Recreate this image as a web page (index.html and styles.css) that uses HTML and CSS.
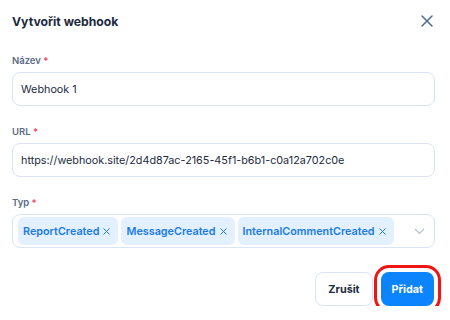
FILE: index.html
```html
<!DOCTYPE html>
<html lang="cs">

<head>
  <meta charset="UTF-8" />
  <meta name="viewport" content="width=device-width, initial-scale=1.0" />
  <title>Vytvořit webhook</title>
  <link rel="stylesheet" href="styles.css">
</head>

<body>
  <div class="modal">
    <div class="modal-header">
      <h2>Vytvořit webhook</h2>
      <button class="close" aria-label="Zavřít">
        <svg width="12" height="12" viewBox="0 0 12 12">
          <path d="M1 1 L11 11 M11 1 L1 11" stroke="currentColor" stroke-width="1.5" stroke-linecap="round" fill="none" />
        </svg>
      </button>
    </div>

    <div class="field">
      <label for="name">Název <span class="req">*</span></label>
      <input type="text" id="name" value="Webhook 1" />
    </div>

    <div class="field">
      <label for="url">URL <span class="req">*</span></label>
      <input type="text" id="url" value="https://webhook.site/2d4d87ac-2165-45f1-b6b1-c0a12a702c0e" />
    </div>

    <div class="field">
      <label>Typ <span class="req">*</span></label>
      <div class="select">
        <div class="chips">
          <span class="chip">ReportCreated
            <svg class="chip-x" width="7" height="7" viewBox="0 0 7 7"><path d="M0.5 0.5 L6.5 6.5 M6.5 0.5 L0.5 6.5" stroke="currentColor" stroke-width="1" fill="none" /></svg>
          </span>
          <span class="chip">MessageCreated
            <svg class="chip-x" width="7" height="7" viewBox="0 0 7 7"><path d="M0.5 0.5 L6.5 6.5 M6.5 0.5 L0.5 6.5" stroke="currentColor" stroke-width="1" fill="none" /></svg>
          </span>
          <span class="chip">InternalCommentCreated
            <svg class="chip-x" width="7" height="7" viewBox="0 0 7 7"><path d="M0.5 0.5 L6.5 6.5 M6.5 0.5 L0.5 6.5" stroke="currentColor" stroke-width="1" fill="none" /></svg>
          </span>
        </div>
        <svg class="chevron" width="11" height="7" viewBox="0 0 11 7">
          <path d="M1 1 L5.5 5.5 L10 1" stroke="currentColor" stroke-width="1.2" fill="none" />
        </svg>
      </div>
    </div>

    <div class="actions">
      <button class="btn btn-cancel">Zrušit</button>
      <button class="btn btn-primary">Přidat</button>
    </div>
  </div>
</body>

</html>
```

FILE: styles.css
```css
body {
  margin: 0;
  background-color: #ffffff;
  font-family: 'Inter', 'Noto Sans', sans-serif;
  color: #1c2b3e;
}

.modal {
  padding: 12px 15px 0 12px;
}

.modal-header {
  display: flex;
  justify-content: space-between;
  align-items: center;
  height: 20px;
  margin-bottom: 23px;
}

.modal-header h2 {
  margin: 0;
  font-size: 12.2px;
  line-height: 20px;
  font-weight: 700;
  color: #1c2b3e;
}

.close {
  background: none;
  border: none;
  padding: 0;
  margin: -3px 2px 0 0;
  color: #4d6b94;
  display: flex;
  cursor: pointer;
}

.field {
  margin-bottom: 20px;
}

label {
  display: block;
  font-size: 9.5px;
  line-height: 12px;
  font-weight: 600;
  color: #5b6b86;
  margin-bottom: 5px;
}

.req {
  color: #f0405c;
}

input {
  display: block;
  width: 100%;
  height: 34px;
  box-sizing: border-box;
  padding: 0 8px;
  font-family: inherit;
  font-size: 10.8px;
  color: #1c2b3e;
  border: 1px solid #d9e5f5;
  border-radius: 8px;
  outline: none;
}

.select {
  display: flex;
  align-items: center;
  justify-content: space-between;
  height: 34px;
  box-sizing: border-box;
  padding: 0 9px 0 5px;
  border: 1px solid #d9e5f5;
  border-radius: 8px;
}

.chips {
  display: flex;
  gap: 3px;
}

.chip {
  display: flex;
  align-items: center;
  height: 28px;
  padding: 0 8px 0 5px;
  background-color: #e2f0ff;
  border-radius: 6px;
  color: #1a7be2;
  font-size: 10.8px;
  font-weight: 600;
}

.chip-x {
  margin-left: 4px;
}

.chevron {
  color: #b4c2d4;
}

.actions {
  display: flex;
  justify-content: flex-end;
  gap: 8px;
  margin-top: 24px;
}

.btn {
  height: 34px;
  padding: 0 12px;
  font-family: inherit;
  font-size: 10.8px;
  font-weight: 700;
  border-radius: 8px;
  cursor: pointer;
}

.btn-cancel {
  background-color: #ffffff;
  color: #1c2b3e;
  border: 1px solid #d9e5f5;
}

.btn-primary {
  background-color: #0b84fe;
  color: #ffffff;
  border: none;
  padding: 0 11px;
  margin-right: 1px;
  outline: 3px solid #f01414;
  outline-offset: 4px;
}
```
